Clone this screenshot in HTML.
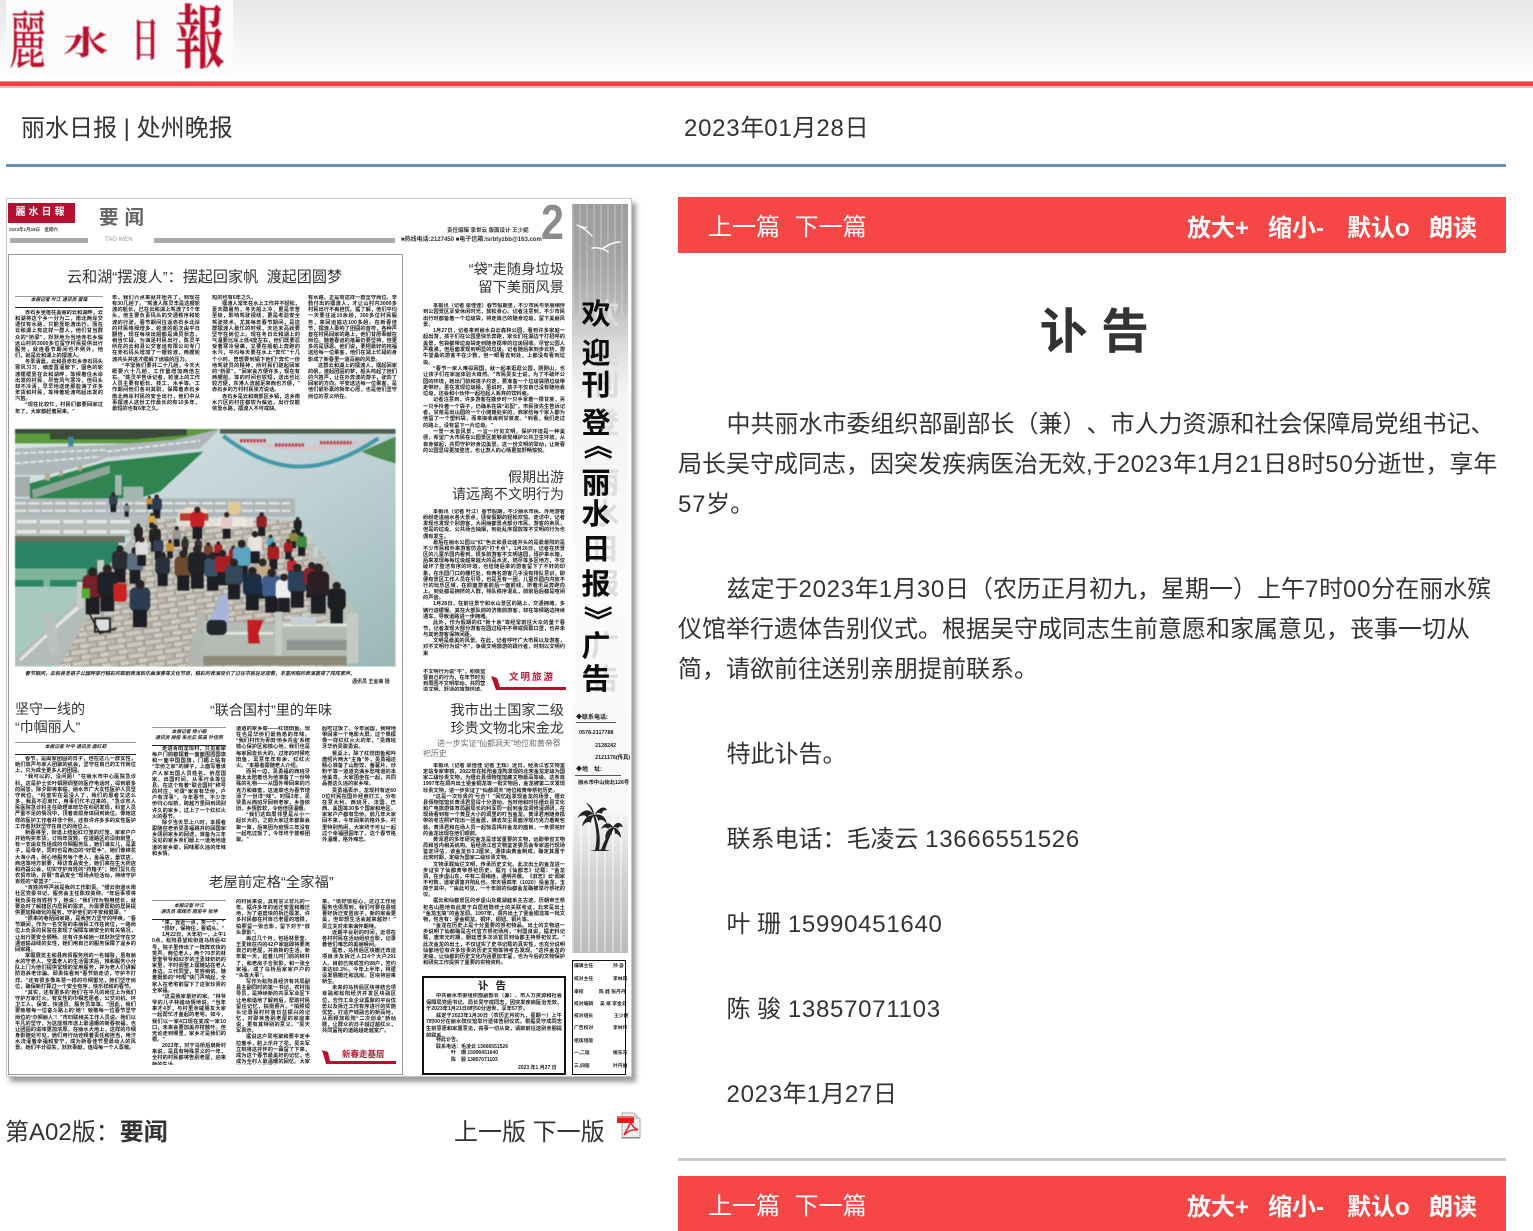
<!DOCTYPE html>
<html lang="zh-CN"><head><meta charset="utf-8"><title>讣告 - 丽水日报</title>
<style>
*{box-sizing:border-box;margin:0;padding:0}
html,body{width:1533px;height:1231px;overflow:hidden;background:#fff}
body{position:relative;font-family:"Liberation Sans","Noto Sans CJK SC",sans-serif;color:#333;text-spacing-trim:space-all}
.a{position:absolute;white-space:nowrap}
.n{letter-spacing:.72px}
.top{position:absolute;left:0;top:0;width:1533px;height:82px;background:linear-gradient(#e6e6e6,#f4f4f4 50%,#fff 95%)}
.red{position:absolute;left:0;top:81px;width:1533px;height:7px;background:#f53f45;border-top:1px solid #f88;border-bottom:2px solid #fbb}
.blue{position:absolute;left:6px;top:164px;width:1500px;height:3px;background:#6a8db5}
.t24{font-size:24px;line-height:34px;color:#333}
.bar{position:absolute;left:678px;width:828px;height:56px;background:#f64646;color:#fff}
.bar span{position:absolute;top:14px;font-size:24px;line-height:34px;white-space:nowrap;word-spacing:8px}
.bar b{position:absolute;top:15px;font-size:24px;line-height:34px;white-space:nowrap}
.art{position:absolute;left:678px;top:405px;width:828px;font-size:24px;line-height:40px;color:#333}
.art p{margin-bottom:45px;white-space:nowrap}
.art i{font-style:normal;display:inline-block;width:48.5px}
.paper{position:absolute;left:6px;top:198px;width:626px;height:879px;background:#fff;border:1px solid #c8c8c8;box-shadow:4px 5px 5px #999;overflow:hidden;font-family:"Liberation Sans","Noto Sans CJK SC",sans-serif;color:#1a1a1a}
.pin{position:absolute;left:-7px;top:-199px;width:660px;height:1290px;filter:blur(.35px)}
.x{position:absolute;white-space:nowrap}
.h{position:absolute;white-space:nowrap;font-family:"Liberation Sans","Noto Sans CJK SC",sans-serif;color:#333;font-weight:400}
.c{position:absolute;overflow:hidden;font-size:5.2px;line-height:6.15px;text-align:justify;word-break:break-all;font-weight:700}
.c p{text-indent:10px}
.by{position:absolute;text-align:center;font-size:4.8px;line-height:6px;font-style:italic;font-weight:700;white-space:nowrap}
.l{position:absolute;height:1px;background:#222}
.g{position:absolute;height:1px;background:#999}
.s{position:absolute;font-family:"Liberation Sans","Noto Sans CJK SC",sans-serif;font-weight:700;font-size:29px;line-height:34px;width:34px;text-align:center;color:#0b0b0b;text-shadow:9px 0 1px #dcdcdc}
.cr{position:absolute;font-size:4.8px;line-height:6px;font-weight:700;white-space:nowrap}
</style></head><body>
<div class="top"></div>
<svg class="a" style="left:6px;top:0" width="227" height="74" viewBox="0 0 227 74"><rect width="227" height="74" fill="#fbfbfb"/>
<g fill="#bd0f2d" font-family="'Noto Serif CJK SC',serif" font-weight="500" style="filter:blur(.4px)">
<text transform="translate(3,63) scale(.78,1.33)" font-size="48">麗</text>
<text transform="translate(57,54) scale(.95,.68)" font-size="48" font-weight="700">水</text>
<text transform="translate(126,56) scale(.58,1.0)" font-size="46" font-weight="700">日</text>
<text transform="translate(169,62) scale(1.08,1.5)" font-size="46" font-weight="700">報</text></g></svg>
<div class="red"></div>
<div class="a t24" style="left:21px;top:112px">丽水日报 | 处州晚报</div>
<div class="a t24" style="left:684px;top:112px"><span class="n">2023</span>年<span class="n">01</span>月<span class="n">28</span>日</div>
<div class="blue"></div>

<div class="paper"><div class="pin">
<div class="x" style="left:8px;top:203px;width:67px;height:20px;background:#b30f2e;color:#fff;font-size:10px;line-height:20px;font-weight:700;text-align:center;letter-spacing:3px">麗水日報</div>
<div class="x" style="left:9px;top:227px;font-size:4.5px;line-height:6px;font-weight:700;color:#444">2023年1月28日　星期六</div>
<div class="x" style="left:10px;top:238px;width:78px;height:5px;background:#aaa"></div>
<div class="x" style="left:154px;top:238px;width:241px;height:5px;background:#aaa"></div>
<div class="x" style="left:99px;top:204px;font-size:19.5px;line-height:29px;letter-spacing:6px;color:#666;font-family:'Liberation Sans','Noto Sans CJK SC',sans-serif;font-weight:700">要闻</div>
<div class="x" style="left:105px;top:237px;font-size:6px;line-height:7px;color:#999">TAO WEN</div>
<div class="x" style="left:447px;top:228px;font-size:5.5px;line-height:6px;font-weight:700;color:#333">责任编辑 季世云 版面设计 王少妮</div>
<div class="x" style="left:401px;top:237px;font-size:6px;line-height:6px;font-weight:700;color:#333">■热线电话:2127450 ■电子信箱:lsrbtyzbb@163.com</div>
<div class="x" style="left:541px;top:198px;font:700 49px/50px 'Liberation Sans',sans-serif;color:#8c8c8c;transform:scaleX(.84);transform-origin:left top">2</div>

<!-- main box -->
<div class="x" style="left:8px;top:254px;width:395px;height:821px;border:1px solid #999"></div>
<div class="h" style="left:67px;top:268px;font-size:15.1px;line-height:20px">云和湖“摆渡人”：摆起回家帆&nbsp; 渡起团圆梦</div>
<div class="g" style="left:15px;top:296px;width:88px"></div><div class="l" style="left:15px;top:307px;width:88px"></div>
<div class="by" style="left:15px;top:298px;width:88px">本报记者 叶江 通讯员 雷锋</div>
<div class="c" style="left:15px;top:310px;width:88px;height:111px"><p>赤石乡坐落在美丽的云和湖畔，云和湖将这个乡一分为二，南北两岸交通仅有水路，只能靠轮渡出行。而在云和湖上有这样一群人，他们甘当群众的“桥梁”，默默地为当地赤石乡偏远山村的3000多位留守村民提供出行服务，就连春节期间也不例外。他们，就是云和湖上的摆渡人。</p><p>冬季清晨，云和县赤石乡赤石码头寒风习习，细度直灌脖下，固色的轮渡缓缓靠在云和湖畔，等候着住木岸出发的村民，尽管风气寒冷，但码头却不冷清，早早地送走那些满了许多年货和村民，等待着轮渡鸣起出发的汽笛。</p><p>“现在比较忙，村民们都要回家过年了，大家都赶着回来。”</p></div>
<div class="c" style="left:112px;top:295px;width:88px;height:123px">年，我们六点来就开始开了，到现在有30几趟了。”驾渡人陈灵丰是这艘轮渡的船长，已在云和湖上驾渡了5个年头，他主要负责码头的交通秩序和轮渡的行驶。春节期间往返赤石乡北岸的村民络绎增多，轮渡的船次由平日翻倍，现在每块出船都是满员状态，相当忙碌。为满足村民出行，陈灵平所在的云和县公交客运有限公司专门在赤石码头增加了一艘轮渡，两艘轮渡共头并进才缓解了运输的压力。<p>“平常我们要开二十几趟，今天大概要六十几趟，工作量增加两倍左右。”陈灵平告诉记者，轮渡上的工作人员主要有船长、技工、水手等。工作期间他们各司其职，保障着赤石乡南北两岸村民的安全出行，他们中从事摆渡人这份工作最长的有10多年，最短的也有6年之久。</p></div>
<div class="c" style="left:212px;top:295px;width:88px;height:123px">短的也有6年之久。<p>摆渡人常年在水上工作并不轻松，夏天酷暑热，冬天船上冷，更是辛苦至极，影响驾驶视线，更是考验安全驾驶技术。尤其每年春节期间，是这群摆渡人最忙的时候，天还未亮就要坚守在岗位上。现在冬日云和湖上的气温要比岸上低4度左右，他们既要忍受着寒冷侵袭，又要在船舶上奔跑的水汽，平均每天要在水上“奔忙”十几个小时。曾想要到镇下他们“奔忙一份地驾驶员的精神，所村民们驱起回家的“桥梁”，”回家会方便许多，现在有两艘船，等的时间也较短，送出也比较方便，东港人流越足来西也方便，”赤石乡的万村村民张方说话。</p><p>赤石乡是云和南部区乡镇，这乡南水穴区的村庄都较为偏远，出行仅能依靠水路，摆渡人不可或缺。</p></div>
<div class="c" style="left:308px;top:295px;width:89px;height:118px">有水路。正是有这样一群坚守岗位、辛勤付出的摆渡人，才让山村内3000多村民出行不再担忧。据了解，他们平均一天要往返10余趟，300多位村民服务，来回运输达100多趟。在新春佳节，摆渡人奏响了团圆的音符，各种声音在村民回家的路上，他们甘愿奉献在岗位。随着春运的落幕仍要坚持，但更多的是感恩。他们说，要把最好的祝福送给每一位乘客，他们在湖上忙碌的身影成了新春里一道亮丽的风景。<p>这群云和湖上的摆渡人，摆起回家的帆，渡起团圆的梦，船头鸣起了他们的汽笛声，让在外奔波的游子，驶向了回家的方向。平安送达每一位乘客，是他们最朴素的新年心愿，也是他们坚守岗位的意义所在。</p></div>

<!-- photo -->
<svg class="x" style="left:0;top:420px;filter:blur(.4px)" width="410" height="280" viewBox="0 0 1230 840">
<defs><clipPath id="ph"><rect x="45" y="27" width="1142" height="713"/></clipPath>
<linearGradient id="w" x1="0" y1="0" x2="1" y2="1"><stop offset="0" stop-color="#dbe4e6"/><stop offset=".55" stop-color="#bdd0d3"/><stop offset="1" stop-color="#99b7b5"/></linearGradient>
<pattern id="pv" width="56" height="34" patternUnits="userSpaceOnUse" patternTransform="rotate(-8)"><rect width="56" height="34" fill="#a8a398"/><rect x="3" y="3" width="48" height="12" fill="#cbc8bf"/><rect x="-24" y="20" width="48" height="12" fill="#bdb9ae"/><rect x="32" y="20" width="48" height="12" fill="#d0cdc4"/></pattern>
<g id="p"><rect x="-22" y="14" width="44" height="52" rx="12" fill="currentColor"/><rect x="-15" y="62" width="30" height="38" fill="#1c1e24"/><circle cy="8" r="10" fill="#2a2522"/></g></defs>
<g clip-path="url(#ph)">
<rect x="45" y="27" width="1142" height="713" fill="url(#w)"/>
<rect x="660" y="27" width="527" height="14" fill="#4c5f50"/>
<path d="M1085 95Q1140 70 1187 50V130Q1130 115 1085 95Z" fill="#4f8a50"/>
<path d="M680 50Q900 100 1125 55V60Q900 130 680 50Z" fill="#d5c6cc"/>
<path d="M670 48Q790 140 900 140T1135 55" fill="none" stroke="#4598a8" stroke-width="12"/>
<path d="M720 62H800M825 75h90M960 68h95" stroke="#b83a4a" stroke-width="10" stroke-dasharray="7 3"/>
<path d="M45 27H660L500 70H45Z" fill="#5d9a3c"/><path d="M45 27H560V45L400 58H150V40H45Z" fill="#3c4a3a"/><rect x="205" y="50" width="15" height="30" fill="#3f83a0"/>
<path d="M90 190L320 125 610 95 480 215 400 240H90Z" fill="#2f8450"/><path d="M95 210L330 135V160L100 235Z" fill="#8fa59a"/><path d="M345 165h20v60h-20zM370 200h60v35h-60z" fill="#a3b7b0"/>
<path d="M45 85L320 75 520 60 660 27 600 85 320 112 290 125 140 165H45Z" fill="#aeb7b9"/>
<path d="M45 100L315 90M45 130L300 110M320 95L600 62" stroke="#e1e4e2" stroke-width="6" stroke-dasharray="18 5"/>
<path d="M135 160h15v22h-15zM178 150h10v18h-10zM235 135h10v18h-10z" fill="#b9a992"/>
<rect x="45" y="235" width="840" height="55" fill="#aeb6b7"/>
<path d="M45 250H870M45 272H870" stroke="#dfe2e0" stroke-width="7" stroke-dasharray="34 6"/>
<rect x="45" y="285" width="420" height="65" fill="#b4bcbc"/>
<path d="M50 305H400M50 335H400" stroke="#e6e8e5" stroke-width="10" stroke-dasharray="60 10"/>
<rect x="45" y="348" width="330" height="20" fill="#69705f"/><rect x="112" y="368" width="26" height="24" fill="#b7a98c"/>
<rect x="45" y="365" width="310" height="135" fill="#2a8565"/><path d="M45 445H260V480H150V512H130V480H45Z" fill="#7fb49a"/>
<rect x="45" y="500" width="240" height="240" fill="#a7c9c0"/><rect x="45" y="170" width="45" height="60" fill="#a3adad"/>
<path d="M470 295L875 300 980 420 1065 610 1040 740H170L250 600 340 480 400 340Z" fill="url(#pv)"/>
<path d="M45 715L250 525 395 355 405 395 265 590 180 735H45Z" fill="#b4bcb9"/><path d="M60 720L250 545M180 610L240 560" stroke="#e3e6e2" stroke-width="9"/>
<rect x="140" y="575" width="30" height="130" fill="#bcc1bb" transform="rotate(-10 155 640)"/><rect x="230" y="485" width="22" height="80" fill="#c9ccc5"/><rect x="292" y="420" width="20" height="45" fill="#c9ccc5"/>
<path d="M920 340L1005 470 1075 590 1040 730 1000 650 930 450Z" fill="#b8bfbb"/><rect x="920" y="340" width="14" height="30" fill="#ccc"/><rect x="940" y="380" width="14" height="30" fill="#ccc"/>
<path d="M535 290h90v-20l-25-8h-40l-25 12zM655 290h85v30h-85z" fill="#e6dfd0"/><path d="M530 295H760V320H530Z" fill="#eee9df" opacity=".8"/>
<rect x="540" y="280" width="85" height="22" fill="#bd3a2a"/><circle cx="703" cy="265" r="20" fill="#e3c795"/>
<g style="color:#2b3b55">
<use href="#p" transform="translate(340,218) scale(.58)" style="color:#33424d"/><use href="#p" transform="translate(470,225) scale(.7)" style="color:#2b3a55"/><use href="#p" transform="translate(448,228) scale(.4)" style="color:#c88a3a"/><use href="#p" transform="translate(380,250) scale(.4)" style="color:#888"/><use href="#p" transform="translate(455,280) scale(.45)" style="color:#d8a83c"/>
<use href="#p" transform="translate(592,262) scale(.95)" style="color:#c51f26"/><use href="#p" transform="translate(680,278) scale(.78)" style="color:#e5c8cc"/><use href="#p" transform="translate(785,278) scale(.7)" style="color:#8e2426"/><use href="#p" transform="translate(893,292) scale(.55)" style="color:#222"/><use href="#p" transform="translate(905,338) scale(.7)" style="color:#3f8a3f"/><use href="#p" transform="translate(880,330) scale(.55)" style="color:#8a8a35"/><use href="#p" transform="translate(865,358) scale(.6)" style="color:#a51f24"/>
<use href="#p" transform="translate(415,312) scale(.6)" style="color:#222"/><use href="#p" transform="translate(465,315) scale(.8)" style="color:#222"/><use href="#p" transform="translate(530,320) scale(.6)" style="color:#999"/><use href="#p" transform="translate(555,350) scale(.5)" style="color:#333"/><use href="#p" transform="translate(595,355) scale(.5)" style="color:#333"/><use href="#p" transform="translate(625,368) scale(.6)" style="color:#7a4030"/><use href="#p" transform="translate(655,365) scale(.55)" style="color:#a81f24"/><use href="#p" transform="translate(700,378) scale(.6)" style="color:#a02028"/><use href="#p" transform="translate(510,360) scale(.55)" style="color:#c0913f"/><use href="#p" transform="translate(475,350) scale(.7)" style="color:#33415a"/>
<use href="#p" transform="translate(765,335) scale(.95)" style="color:#e6e2dc"/><use href="#p" transform="translate(812,345) scale(.5)" style="color:#5ba4c4"/><use href="#p" transform="translate(820,368) scale(.8)" style="color:#a81f24"/><use href="#p" transform="translate(875,412) scale(.65)" style="color:#c22a30"/><use href="#p" transform="translate(725,362) scale(1.22)" style="color:#5ba4c4"/>
<use href="#p" transform="translate(360,378) scale(1.1)" style="color:#2a2d30"/><use href="#p" transform="translate(405,383) scale(1.08)" style="color:#5d6e80"/><use href="#p" transform="translate(425,352) scale(.85)" style="color:#ddd"/><use href="#p" transform="translate(488,398) scale(1)" style="color:#28313d"/><use href="#p" transform="translate(550,392) scale(1.2)" style="color:#6b4a2f"/><use href="#p" transform="translate(592,378) scale(1.28)" style="color:#1f2226"/><use href="#p" transform="translate(638,398) scale(1.14)" style="color:#3a5068"/><use href="#p" transform="translate(668,392) scale(1.04)" style="color:#a81f24"/><use href="#p" transform="translate(702,418) scale(1.2)" style="color:#33485a"/><use href="#p" transform="translate(788,418) scale(1.18)" style="color:#c3a98a"/><use href="#p" transform="translate(757,443) scale(1.28)" style="color:#1d2c45"/><use href="#p" transform="translate(815,448) scale(1.3)" style="color:#3f5c8a"/><use href="#p" transform="translate(852,463) scale(1.14)" style="color:#eee"/><use href="#p" transform="translate(892,433) scale(1.3)" style="color:#2c4159"/><use href="#p" transform="translate(935,428) scale(1.05)" style="color:#8a2030"/><use href="#p" transform="translate(955,433) scale(1.48)" style="color:#2a1f22"/><use href="#p" transform="translate(1010,488) scale(1.24)" style="color:#1d1f22"/>
<use href="#p" transform="translate(278,445) scale(1.38)" style="color:#7a1f2a"/><use href="#p" transform="translate(322,436) scale(1.38)" style="color:#1f2226"/><use href="#p" transform="translate(420,482) scale(1.4)" style="color:#2c3d50"/></g>
<rect x="340" y="490" width="40" height="55" rx="8" fill="#c22"/><rect x="285" y="595" width="45" height="40" fill="#ddd" stroke="#222" stroke-width="6"/><path d="M265 575L300 640 350 625" stroke="#222" stroke-width="5" fill="none"/><rect x="245" y="505" width="25" height="30" fill="#5a3"/>
<path d="M590 575h22v130h-22zM580 640l30-30v130h-50z" fill="#b2b7b2"/>
<rect x="610" y="610" width="440" height="120" fill="#b5bab5"/><path d="M850 615H1050M620 640H820" stroke="#e4e6e2" stroke-width="8"/><path d="M860 660h180v30H860z" fill="#8e938f"/><rect x="825" y="575" width="22" height="150" fill="#c5c9c4"/><rect x="1040" y="580" width="35" height="150" fill="#c5c9c4"/><rect x="610" y="708" width="430" height="28" fill="#8c8b78"/>
<path d="M625 605l30-60q-5-25 25-20 10 30 7 80l-10 35-50-5z" fill="#a9b4d8"/><rect x="620" y="600" width="60" height="45" rx="14" fill="#23262a"/>
<path d="M742 600h48l-15 40 5 30h-35z" fill="#c21d1f"/><path d="M870 590h80l-5 25h-70z" fill="#c8d0d6"/>
</g></svg>
<div class="x" style="left:25px;top:671px;font-size:5px;line-height:6px;font-style:italic;font-weight:700">春节期间，云和县圣祖子公园畔举行精彩的歌剧表演和乐曲演奏等文化节目，精彩的表演吸引了过往市民驻足观看，丰富闲暇的表演赢得了阵阵掌声。</div>
<div class="x" style="left:352px;top:679px;font-size:5px;line-height:6px;font-weight:700">通讯员 王金荣 摄</div>

<!-- lower left -->
<div class="h" style="left:15px;top:700px;font-size:14px;line-height:18px">坚守一线的<br>“巾帼丽人”</div>
<div class="g" style="left:15px;top:742px;width:121px"></div><div class="l" style="left:15px;top:754px;width:121px"></div>
<div class="by" style="left:15px;top:745px;width:121px">本报记者 叶平 通讯员 唐红莉</div>
<div class="c" style="left:15px;top:756px;width:121px;height:308px"><p>春节，是阖家团圆的日子，但在这儿一群女性，她们放声与家人团聚的机会，坚守在自己的工作岗位上，只为成全更多人的团圆。</p><p>“我可以的，没问题！”在丽水市中心医院急诊科，这是护士长叶娟刚调整的医疗电话时，得到最多的回答。除夕即将来临，丽水市广大女性医护人员坚守岗位。“科室实在是没人了，我们的患者又这么多，我真不忍离忙，用事们忙不过来的。”急诊市人民医院急诊科主任助理单晓华在科研发现，科室人员严重不足的情况中，顶着自损身体回到岗位。像她这样的医护工作者并非个例，还有许许多多的女性医护工作者默默坚守在自己的岗位上。</p><p>新春将至，街道上结起红灯笼的灯笼，家家户户开始购买年货，订购年货数。在道路区的沿街前里，有一支由女性组成的巾帼服务队，她们满女儿，是妻子，是母亲，同时也是西边的“好帮手”。她们像棉花大海小舟，耐心地服务每个老人，金品店，量饮店，商店等地方前要，拜访食品安全。她们来在生大药店和药器公会，切实守护百姓的“药箱子”；她们复扎在农贸市场，开展“食品安全”现场点检活动，持续守护百姓的“菜篮子”……</p><p>“百姓的呼声就是我的工作职责。”缙云街道水南社区党委书记、服务会主任陈双英称。“年后事项将我负责在百姓桥下，她说：”我们作为物用结长，就要及时了解辖区内居民的需求，为需要帮助的居民提供更加精细化的服务，守护他们的平安和健康。”</p><p>“原来的巷陌回家路，是我努力坚守的呼唤。”春节期间，作为一名交警的朱丽婷工作在岗位，一路岗位上负责的民警在发现了保障车辆安全的有关情况，让出行更安全顺畅。还有许多和她一样默默坚守在交通运输战线的女性，她们用自己的服务保障了返乡的回家路。</p><p>掌握展览主和县商贸服务所的一名辅警，虽有丽水的守老人、空巢老人的生活需求后，推和服务小分队上门为他们提供常规的常用服务，并为老人们讲解防范养老诈骗。邱贵佑看到“春节前走访，守护不打烊。”还有很多像朱慧一样的巾帼雷兄，她们坚守岗位，确保新打算过一个安全有序，快乐祥和的春节。</p><p>“其实，还有更多的‘她们’在平凡的岗位上为我们守护万家灯火。有女性的巾帼志愿者，公交司机、环卫工人、保安、快递员、服务员等等。”因此，我们要致敬每一位奋斗路上的‘她’！致敬每一位春节坚守岗位的‘巾帼丽人’！”市妇联相关工作人员说。她们以平凡的坚守，为这座城市送上最温暖的新春祝福，也让团圆的滋味更加浓厚。在丽水大地上，这样的巾帼身影随处可见，她们用行动诠释着责任和担当，用汗水浇灌着幸福和安宁，成为新春佳节里最动人的风景。她们不计得失，默默奉献，值得每一个人尊敬。</p></div>

<div class="h" style="left:210px;top:701px;font-size:14.1px;line-height:18px">“联合国村”里的年味</div>
<div class="g" style="left:152px;top:727px;width:74px"></div><div class="l" style="left:152px;top:745px;width:74px"></div>
<div class="by" style="left:152px;top:730px;width:74px">本报记者 杨小丽<br>通讯员 柳俊 朱光云 陈昊 叶佳燕</div>
<div class="c" style="left:152px;top:746px;width:74px;height:110px"><p>走进青田龙现村，只见那家每户门前都摆着一面面围围国旗和一面中国国旗，门楣上贴有“华侨之家”的牌子，上面写着该户人家出国人员姓名、侨居国家、出国时间、从事行业等信息。在这个有着“联合国村”称号的村庄，可谓“家家有华侨，户户有洋事”。今年春节，不少华侨归心似箭，跨越万里回到阔别许久的家乡，过上了一个红红火火的春节。</p><p>除夕当天早上八时，本报者跟随在老侨吴勇福跳开的回国家乡阔别家乡的回途，准备为三年没见的家乡亲们献上一道地地道道的家乡菜，回味那久违的年味和乡情。</p></div>
<div class="c" style="left:236px;top:726px;width:74px;height:130px">道道的家乡菜——红烧田鱼。现在也是华侨们最熟悉的年味。“我们村作为青田‘侨乡共舍’系统核心保护区和核心地，我们也是每家回去长大的。过年的时候吃田鱼，寓意年年有余、红红火火。”本报者跟随老人介绍。<p>而另一边，吴勇福的西班牙籍太太陪着也为他准备了一份特殊的礼物——从国外带回来的巧克力和蜂蜜，这道菜也为春节增添了一份洋“味”。时隔3年，吴贤勇从西班牙回到老家，乡音依旧，乡情醉软，令他倍感温暖。</p><p>“我们这四周邻里是从小一起长大的，之前大家过年都聚会聚一聚，后来因为疫情三年没有一起吃过饭了，今年终于能够团聚。”</p></div>
<div class="c" style="left:322px;top:726px;width:74px;height:124px">起吃过饭了。今年回国，我特地带回来一个电影大屏。过个像模像一样红红火火的年，”吴西班牙华侨吴骏勇说。<p>餐桌上，除了红烧田鱼和吟唐绍片两大“主角”外，吴勇福还精心准备了山粉饺、番薯片、炒粉干等一道道充满乡愁味道的本地美食。大家围坐在一起，共同品尝这久违的家乡味。</p><p>吴勇福表示，龙现村有近600位村民在国外经商打工，分布在意大利、西班牙、法国、巴西、美国等30多个国家和地区。家家户户都有华侨。前几年大家回不来，今年回来的格外多。村里特别热闹，大家终于可以一起过个幸福团圆年了。这个春节格外温暖，格外难忘。</p></div>

<div class="h" style="left:209px;top:874px;font-size:14.4px;line-height:18px">老屋前定格“全家福”</div>
<div class="g" style="left:152px;top:900px;width:74px"></div><div class="l" style="left:152px;top:919px;width:74px"></div>
<div class="by" style="left:152px;top:904px;width:74px">本报记者 叶江<br>通讯员 周辉杰 周俊平 张坤</div>
<div class="c" style="left:152px;top:920px;width:74px;height:145px"><p>“来，靠近一点，笑一个。”</p><p>“很好，保持住，看镜头。”</p><p>1月22日，大年初一，上午10点，松阳县望松街道马桥后42号，院子里传出了一阵阵欢快的笑声。两位老人，两个70岁的林景奎爷爷和82岁的王麦妹奶奶的家里，不时调整上摆摊站在老人身边。三代同堂，笑容相依。随着摄影的“咔嚓”快门声响起，全家人在老宅前留下了这张珍贵的全家福。</p><p>“这是我家最好的家。”林爷爷的儿子林峰动情地说。“当年来才4岁，与村里亲戚朋友大家一起帮忙才盖起的老宅。如今，我们以一家4口现在变成一家10口，未来会更加美开枝散叶。但无论走到哪里，家乡才是我们的根。”</p><p>2023年，对于马桥后启新村来说，是具有特殊意义的一年，全村的村民都将告别老屋，迎来新的生活。</p></div>
<div class="c" style="left:236px;top:899px;width:74px;height:166px">的村民来说，具有意义非凡的一年。据许多年的运迁安置和搬迁地，为了进度块的拆迁模发、许多村民都在村自己老屋的墙根，拍照留一张合影，留下对于“放头录影”。<p>再过几个月，包括林景奎、王麦妹在内的42户家庭即将要离自己的老屋，开启新的生活。新年第一天，趁着儿时门前的树开了，和老房子合张影，和一张全家福。成了马桥后家家户户的“头等大事”。</p><p>写作为松阳县经济有共局副县主副同时的第一书记，农村指导员，是持续新的共享军业区下让地和谐地了解到后，帮助村民留住记忆，拍摄照片。“拍照镜头记录民村村落日益振兴的记忆，对即将告别老屋的家庭来说，更有其特别的意义。”吴天军表示。</p><p>据说这户吴宅聚和要平定手拉着手，脸上乐开了花，吴夫军立刻将这开怀的一幕留了下来，成为这个春节最美好的记忆，也成为全村人最温暖的回忆。大家纷纷赶来合影留念。</p></div>
<div class="c" style="left:322px;top:899px;width:74px;height:143px">来。“很好很贴心，这过工作组服务也很周到，我们可要在县城曹好拆迁安置房子，新的家会更美，但却想生活会越来越好！”吴立夫对未来满怀期待。<p>近期平台别的时间，近邻在各村村民在活动组织合影，记录着他们难忘的美丽瞬间。</p><p>据悉，马桥后区块搬迁改造项目涉及拆迁人口4个大户291人。目前已完成签约98户，签约率达80.3%。今年上半年，将建设发展搬迁和选房。区块将迎来新生。</p><p>未来的马桥后区块将结合项目融和松阳经济开发区块融区位，合作工业企业集聚的平台优势以及拆迁工作有序进行的实施优势，打造产城融合的新高地，从而释放松阳“二次创业”新动能，让群众的日子越过越红火，共同富裕的道路越走越宽广。</p></div>
<svg class="x" style="left:320px;top:1048px" width="78" height="20" viewBox="0 0 78 20"><path d="M2 2L8 4 10 13H76V16H6Z" fill="#b90f2b"/></svg>
<div class="x" style="left:342px;top:1048px;font:700 8.5px/12px 'Liberation Sans','Noto Sans CJK SC',sans-serif;color:#bb1730">新春走基层</div>

<!-- right col -->
<div class="h" style="right:96px;top:261px;font-size:14.3px;line-height:18px;text-align:right">“袋”走随身垃圾<br>留下美丽风景</div>
<div class="c" style="left:423px;top:303px;width:142px;height:150px;line-height:6.3px"><p>本报讯（记者 梁佳佳）春节假期里，不少市民与亲朋相伴到公园景区享受休闲时光，放松身心。记者注意到，不少市民出行时都备着一个垃圾袋，将走自己的随身垃圾，留下美丽风景。</p><p>1月27日，记者来到丽水白云森林公园，看到许多家庭一起出游，孩子们在公园里快乐奔跑，家长们在湖边干打招呼的美景，包袋都带垃圾袋走到随身携带的垃圾回收。尽管公园人声鼎沸，但后面发现到明显的垃圾。记者随后来到步云桥，游牛望桑的游客不在少数，但一眼看去到处，上都没有看到垃圾。</p><p>“春节一家人难得回国，就一起来逛逛公园，刚刚山，也让孩子们在家庭体验大自然。”市民吴女士说，为了不破坏公园的环境，她出门前和孩子约定，要准备一个垃圾袋把垃圾带走带好。虽在发现垃圾桶，虽说时，孩子不仅自己没有随地丢垃圾，还会和小伙伴一起捡起人丢弃的饮料瓶。</p><p>记者注意到，许多游客在散步时一只手拿着一根甘蔗，另一只手拎着一个袋子，仍确系在袋“彩配”。市民张先生告诉记者，甘蔗是出山园的一个小摊摊处买的，商家给每个家人都为他留了一个塑料袋，而来接收再到甘蔗皮。“到看，我们走过的路上，没有留下一片垃圾。”</p><p>一景一木皆风景，一言一行见文明。保护环境是一种美德，希望广大市民在公园景区能够自觉维护公共卫生环境，从自身做起，共同守护好身边美景。这一份文明的举动，让新春的公园显得更加整洁，也让游人的心情更加舒畅愉悦。</p></div>
<div class="h" style="right:96px;top:469px;font-size:14px;line-height:17px;text-align:right">假期出游<br>请远离不文明行为</div>
<div class="c" style="left:423px;top:509px;width:142px;height:161px"><p>本报讯（记者 叶江）春节假期，不少丽水市民、外地游客纷纷走进丽水各大景点，感受假期的轻松欢愉。走访中，记者发现也发现个别游客，大闹丽都景点部分市民、游客的卖风，但是的垃圾、公共场合抽烟，到处乱序摆放等不文明的行为也偶有发生。</p><p>最后在丽水公园以“红”色云和县云峰开头的是最最阳的是不少市民和外来游客仿造的“打卡点”，1月26日，记者在庆景区的儿童乐园内看到，很多前游客不文明进园，博护来水箱，后来发现每每垃圾越来越大的高水泥，燃尽等多区地方，不仅破坏了整洁有序的环境，也给随后来的游客留下了不好的印象，在乐园门口的栅栏处，有两名游客几乎没有排队意识，即便有景区工作人员在引导，也是互有一团。儿童乐园内内放不行的玩乐区域，在前面游客前后一面前线，挤着乐高奔跑向上。到处都是拥挤的人群，排队秩序混乱，前前后后都是喧闹的声音。</p><p>1月28日，在前往景宁和水山景区的路上，交通拥堵，多辆行进缓慢。其在大部队前的济南前游客，却在等候路边持续通车，导致道路进一步拥堵。</p><p>此外，作为假期的红“新十余”等经常前往大众的量个春节，记者发现大部分游客在园过程中不带或佩戴口罩，也并未与其他游客保持间距。</p><p>文明是最美的风景。在此，记者呼吁广大市民以及游客，对不文明行为说“不”，争做文明旅游的践行者，时刻以文明约束</p></div>
<div class="c" style="left:423px;top:669px;width:65px;height:22px;text-align:left">不文明行为说“不”，积极监督自己的行为，在年节时见到周围不文明举动，共同营造文明、舒适的旅游环境。</div>
<svg class="x" style="left:488px;top:674px" width="80" height="18" viewBox="0 0 80 18"><path d="M3 2L9 4 12 13H78V16H8Z" fill="#b90f2b"/></svg>
<div class="x" style="left:509px;top:671px;font:700 9.5px/13px 'Liberation Sans','Noto Sans CJK SC',sans-serif;color:#bb1730;letter-spacing:2px">文明旅游</div>

<div class="h" style="right:96px;top:702px;font-size:14.2px;line-height:18px;text-align:right">我市出土国家二级<br>珍贵文物北宋金龙</div>
<div class="h" style="left:423px;top:739px;width:142px;font-size:7.9px;line-height:9.5px;color:#666;white-space:normal;text-indent:14px">进一步实证“仙都洞天”地位和黄帝祭祀历史</div>
<div class="c" style="left:423px;top:763px;width:142px;height:206px"><p>本报讯（记者 梁佳佳 记者 王辉）近日，经浙江省文物鉴定站专家审核，2022年在松阳金龙陶发现的北宋金龙定级为国家二级珍贵文物，为缙云县博物馆馆藏文物最高等级。这条自1997年在洞内出土鎏金铜龙等一批文物后，金龙被第二次发现珍贵文物，进一步实证了“仙都洞天”地位和黄帝祭祀历史。</p><p>“这是一次珍贵的‘亏合’！”回忆起发现金龙的场景，缙云县博物馆馆长黄泽君显得十分激动。当时他和时任缙云县文化和广电旅游体育局副局长的利军同一起到金龙洞修灌调研，在现场看到有一个黄豆大小的洞里的叮当金龙。黄泽君用随身携带的考古照铲挖出一团金属，拂去灰尘表面浮现巧克力着斯包装。黄泽君和在场人员一起惊喜揭开金龙的面目，一条很完好的金龙出现在他们眼前。</p><p>黄泽君的多年研究金龙是非常重要的文物，远即带省文物局和省内相关机构。后经浙江省文物鉴定委员会专家进行现场鉴定评估，该金龙长3.3厘米，通体由黄金制成，确定其属于北宋时期，定级为国家二级珍贵文物。</p><p>文物承载灿烂文明，传承历史文化。此次出土的金龙进一步证实了仙都黄帝祭祀历史。据元《仙都志》记载：“金龙洞，在步虚山东，中有二洞相连，通明开敞。《旧志》云‘闻家不可数，道家谓第开阳乱也。宋天禧四年（1020）投金龙、玉简于其中。’”由此可见，一千年前的仙都金龙确被举行祭祀的仪。</p><p>据云和仙都景区的步虚山及鼎湖峰系主古迹，历朝帝王祭祀名山胜地有此类于白居结隐修士的关联考证，北宋是出土“金龙玉简”的金龙洞。1997年，洞内出土了鎏金铜龙等一批文物，包含有：鎏金铜龙、铜环、铜钮、铜片等。</p><p>“金龙在历史上是十分重要的祭祀物品。出土的文物进一步说明了仙都确是古代官方祭祀场所，”利国良说，据史料记载，唐宋元时期，朝廷曾多次派官员到仙都主持祭祀仪式。”此次金龙的出土，不仅证实了史书记载的真实性，也充分说明仙都地位有许多珍贵的历史文物等待考古发现。”这件金龙的定级，让仙都的历史文化内涵更加丰富，也为今后的文物保护和研究工作提供了重要的实物资料。</p></div>

<div class="x" style="left:422px;top:976px;width:144px;height:99px;border:2px solid #111"></div>
<div class="x" style="left:478px;top:980px;font:700 10.5px/13px 'Liberation Sans','Noto Sans CJK SC',sans-serif;letter-spacing:7px">讣告</div>
<div class="c" style="left:426px;top:993px;width:136px;height:44px;line-height:6.6px"><p>中共丽水市委组织部副部长（兼）、市人力资源和社会保障局党组书记、局长吴守成同志，因突发疾病医治无效，于2023年1月21日8时50分逝世，享年57岁。</p><p>兹定于2023年1月30日（农历正月初九，星期一）上午7时00分在丽水殡仪馆举行遗体告别仪式。根据吴守成同志生前意愿和家属意见，丧事一切从简，请欲前往送别亲朋提前联系。</p></div>
<div class="x" style="left:436px;top:1037px;font-size:5px;line-height:6.7px;font-weight:600">特此讣告。<br>联系电话：毛凌云 13666551526<br>　　　叶　珊 15990451640<br>　　　陈　骏 13857071103</div>
<div class="x" style="left:518px;top:1065px;font-size:5px;line-height:6px;font-weight:600">2023 年1 月27 日</div>

<!-- sidebar -->
<div class="x" style="left:572px;top:204px;width:56px;height:749px;background:linear-gradient(#a2a2a2,#a9a9a9 8%,#c0c0c0 14%,#dcdcdc 19%,#f3f3f3 25%,#fbfbfb 50%,#f8f8f8 82%,#d8d8d8 90%,#c0c0c0 100%)"></div>
<div class="x" style="left:572px;top:204px;width:56px;height:110px;background:repeating-linear-gradient(90deg,rgba(255,255,255,.14) 0 2px,rgba(0,0,0,.03) 2px 7px)"></div>
<div class="x" style="left:572px;top:815px;width:56px;height:138px;background:repeating-linear-gradient(90deg,rgba(255,255,255,.3) 0 2px,rgba(0,0,0,.03) 2px 8px)"></div>
<svg class="x" style="left:572px;top:215px" width="56" height="40" viewBox="0 0 56 40" fill="none" stroke="#fff" stroke-linecap="round"><path d="M5 10Q14 14 20 21" stroke-width="1.3"/><path d="M8 11Q16 14 14 12" stroke-width="1"/><path d="M20 33Q30 32 36 37M30 34Q40 27 48 27" stroke-width="1.4"/></svg>
<div class="s" style="left:579px;top:298px">欢</div><div class="s" style="left:579px;top:337px">迎</div><div class="s" style="left:579px;top:369px">刊</div><div class="s" style="left:579px;top:407px">登</div>
<div class="s" style="left:579px;top:428px;transform:rotate(90deg);text-shadow:none">《</div>
<div class="s" style="left:579px;top:467px">丽</div><div class="s" style="left:579px;top:498px">水</div><div class="s" style="left:579px;top:533px">日</div><div class="s" style="left:579px;top:568px">报</div>
<div class="s" style="left:579px;top:603px;transform:rotate(90deg);text-shadow:none">》</div>
<div class="s" style="left:579px;top:630px">广</div><div class="s" style="left:579px;top:663px">告</div>

<div class="cr" style="left:576px;top:715px;font-size:6px">◆联系电话:</div><div class="g" style="left:576px;top:722px;width:40px;background:#555"></div>
<div class="cr" style="left:579px;top:727px;font-size:5.4px;line-height:12.6px">0578-2117788<br>　　　2128242<br>　　　2121176(传真)</div>
<div class="cr" style="left:576px;top:767px;font-size:6px">◆地　址:</div><div class="g" style="left:575px;top:775px;width:46px;background:#555"></div>
<div class="cr" style="left:578px;top:780px;font-size:5.3px">丽水市中山街北126号</div>
<svg class="x" style="left:576px;top:802px" width="48" height="50" viewBox="0 0 48 50" fill="#222"><path d="M19 48C22 36 20 24 17 13L19 13C23 25 25 37 23 48Z"/><path d="M25 48C28 40 31 33 36 25L38 26C34 34 31 41 29 48Z"/><path d="M18 13C13 6 7 7 1 16 7 12 10 13 11 16 13 12 16 12 18 13ZM18 13C12 13 7 17 6 25 9 20 13 19 15 21 15 17 17 15 18 13ZM18 13C24 4 29 4 31 8 27 8 26 10 26 12 23 10 20 11 18 13ZM18 13C23 11 30 14 31 22 27 17 24 17 22 19 22 16 20 14 18 13ZM18 13C18 7 14 2 10 1 14 5 15 8 18 13Z"/><path d="M37 25C33 19 28 21 25 27 28 25 31 25 32 27 33 25 35 25 37 25ZM37 25C33 26 29 30 29 37 31 33 34 31 36 33 35 30 36 27 37 25ZM37 25C41 19 45 20 47 25 44 24 42 25 42 27 41 25 39 25 37 25ZM37 25C41 26 45 30 45 36 42 32 40 31 39 32 39 29 38 27 37 25Z"/><path d="M14 49Q25 46 34 49Z"/></svg>
<div class="x" style="left:572px;top:960px;width:54px;height:115px;border:1px solid #111"></div>
<div class="cr" style="left:574px;top:964px">编辑主任</div><div class="cr" style="left:613px;top:964px">孙 奇</div>
<div class="cr" style="left:574px;top:977px">校对主任</div><div class="cr" style="left:613px;top:977px">李林风</div>
<div class="cr" style="left:574px;top:990px">审校</div><div class="cr" style="left:599px;top:990px">陈 峰 张丹丹</div>
<div class="cr" style="left:574px;top:1002px">校对编辑</div><div class="cr" style="left:600px;top:1002px">吴 斌 李金云</div>
<div class="cr" style="left:574px;top:1014px">校对组长</div><div class="cr" style="left:614px;top:1014px">王少妮</div>
<div class="cr" style="left:574px;top:1026px">广告校对</div><div class="cr" style="left:613px;top:1026px">李林伟</div>
<div class="cr" style="left:574px;top:1039px">组版组版</div>
<div class="cr" style="left:574px;top:1051px">一,二版</div><div class="cr" style="left:613px;top:1051px">姚东东</div>
<div class="cr" style="left:574px;top:1064px">三,四版</div><div class="cr" style="left:613px;top:1064px">叶丹丽</div>
</div></div>

<div class="a t24" style="left:5px;top:1116px">第A02版：<b>要闻</b></div>
<div class="a t24" style="left:454px;top:1116px">上一版 下一版</div>
<svg class="a" style="left:616px;top:1112px" width="26" height="28" viewBox="0 0 26 28"><path d="M6 1H18L24 7V26H6Z" fill="#eee" stroke="#aaa"/><path d="M18 1V7H24Z" fill="#ccc"/><rect x="1" y="4" width="17" height="7" fill="#e01b24"/><rect x="1" y="4" width="17" height="2" fill="#f66"/><path d="M15 10C13 14 10 19 8 23 12 19 16 17 22 18 18 16 16 14 15 10Z" fill="none" stroke="#d92b30" stroke-width="1.6"/><rect x="6" y="25" width="18" height="1.5" fill="#888"/></svg>

<div class="bar" style="top:197px"><span style="left:30px">上一篇 下一篇</span><b style="left:509px">放大+</b><b style="left:590px">缩小-</b><b style="left:669px">默认o</b><b style="left:751px">朗读</b></div>
<div class="a" style="left:1040px;top:299px;font-size:48px;line-height:68px;font-weight:700;color:#333;letter-spacing:13px">讣告</div>
<div class="art">
<p><i></i>中共丽水市委组织部副部长（兼）、市人力资源和社会保障局党组书记、<br>局长吴守成同志，因突发疾病医治无效,于<span class="n">2023</span>年<span class="n">1</span>月<span class="n">21</span>日<span class="n">8</span>时<span class="n">50</span>分逝世，享年<br><span class="n">57</span>岁。</p>
<p><i></i>兹定于<span class="n">2023</span>年<span class="n">1</span>月<span class="n">30</span>日（农历正月初九，星期一）上午<span class="n">7</span>时<span class="n">00</span>分在丽水殡<br>仪馆举行遗体告别仪式。根据吴守成同志生前意愿和家属意见，丧事一切从<br>简，请欲前往送别亲朋提前联系。</p>
<p><i></i>特此讣告。</p>
<p><i></i>联系电话：毛凌云 <span class="n">13666551526</span></p>
<p><i></i>叶 珊 <span class="n">15990451640</span></p>
<p><i></i>陈 骏 <span class="n">13857071103</span></p>
<p><i></i><span class="n">2023</span>年<span class="n">1</span>月<span class="n">27</span>日</p>
</div>
<div class="a" style="left:678px;top:1158px;width:828px;height:3px;background:#ccc"></div>
<div class="bar" style="top:1176px;height:55px"><span style="left:30px">上一篇 下一篇</span><b style="left:509px">放大+</b><b style="left:590px">缩小-</b><b style="left:669px">默认o</b><b style="left:751px">朗读</b></div>
</body></html>
